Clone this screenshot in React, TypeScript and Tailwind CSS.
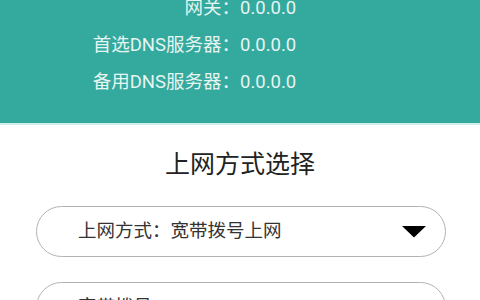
const rows = [
  { label: '网关：', value: '0.0.0.0' },
  { label: '首选DNS服务器：', value: '0.0.0.0' },
  { label: '备用DNS服务器：', value: '0.0.0.0' },
];

function Caret() {
  return (
    <svg width="24" height="12" viewBox="0 0 24 12" className="shrink-0">
      <path d="M0 0 H24 L12 11.5 Z" fill="#000" />
    </svg>
  );
}

export default function App() {
  return (
    <div
      className="w-[480px] h-[300px] overflow-hidden bg-white"
      style={{ fontFamily: 'Roboto, "Noto Sans CJK SC", sans-serif' }}
    >
      {/* network info panel */}
      <div className="h-[123px] bg-[#34a99d] flex flex-col justify-end pb-[22px] overflow-hidden">
        {rows.map((r) => (
          <div key={r.label} className="grid grid-cols-[240px_1fr] h-[37px] items-center text-[18.5px] text-[#e6f4f2] leading-none shrink-0">
            <span className="text-right">{r.label}</span>
            <span>{r.value}</span>
          </div>
        ))}
      </div>
      <div className="h-[2px] bg-[#cdeeea]" />

      <div className="text-center text-[25px] text-[#222] mt-[27px] leading-none">上网方式选择</div>

      <div className="ml-[36px] w-[410px] mt-[29px] flex flex-col gap-[25px]">
        <div className="h-[51px] rounded-full border border-[#b3b3b3] flex items-center pl-[41px] pr-[19px]">
          <span className="flex-1 text-[18.5px] text-[#333]">上网方式：宽带拨号上网</span>
          <Caret />
        </div>
        <div className="h-[51px] rounded-full border border-[#b3b3b3] flex items-center pl-[41px] pr-[19px]">
          <span className="flex-1 text-[18.5px] text-[#333]">宽带拨号</span>
        </div>
      </div>
    </div>
  );
}
